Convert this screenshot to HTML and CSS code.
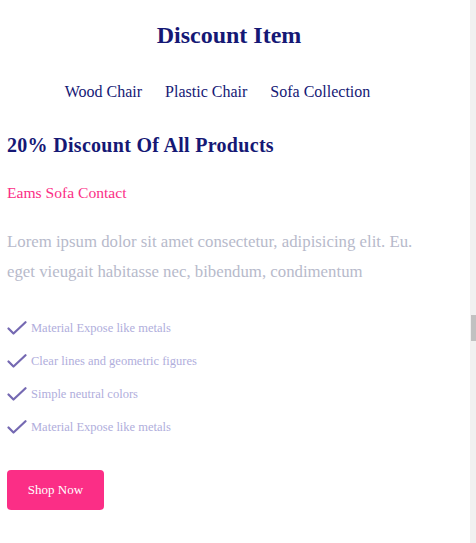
FILE: index.html
```html
<!DOCTYPE html>
<html lang="en">
<head>
<meta charset="utf-8">
<title>Discount Item</title>
<link rel="stylesheet" href="styles.css">
</head>
<body>
<main class="discount">
  <h1 class="discount__title">Discount Item</h1>
  <nav class="tabs">
    <a class="tabs__item" href="#">Wood Chair</a>
    <a class="tabs__item" href="#">Plastic Chair</a>
    <a class="tabs__item" href="#">Sofa Collection</a>
  </nav>
  <h2 class="discount__heading">20% Discount Of All Products</h2>
  <p class="discount__sub">Eams Sofa Contact</p>
  <p class="discount__text">Lorem ipsum dolor sit amet consectetur, adipisicing elit. Eu.<br>eget vieugait habitasse nec, bibendum, condimentum</p>
  <ul class="features">
    <li class="features__item"><svg class="features__icon" viewBox="0 0 20 14" width="20" height="14"><path d="M1.5 7.5 L6.5 12.5 L18.5 1.2" fill="none" stroke="currentColor" stroke-width="2.2" stroke-linecap="round" stroke-linejoin="round"/></svg>Material Expose like metals</li>
    <li class="features__item"><svg class="features__icon" viewBox="0 0 20 14" width="20" height="14"><path d="M1.5 7.5 L6.5 12.5 L18.5 1.2" fill="none" stroke="currentColor" stroke-width="2.2" stroke-linecap="round" stroke-linejoin="round"/></svg>Clear lines and geometric figures</li>
    <li class="features__item"><svg class="features__icon" viewBox="0 0 20 14" width="20" height="14"><path d="M1.5 7.5 L6.5 12.5 L18.5 1.2" fill="none" stroke="currentColor" stroke-width="2.2" stroke-linecap="round" stroke-linejoin="round"/></svg>Simple neutral colors</li>
    <li class="features__item"><svg class="features__icon" viewBox="0 0 20 14" width="20" height="14"><path d="M1.5 7.5 L6.5 12.5 L18.5 1.2" fill="none" stroke="currentColor" stroke-width="2.2" stroke-linecap="round" stroke-linejoin="round"/></svg>Material Expose like metals</li>
  </ul>
  <button class="btn" type="button">Shop Now</button>
</main>
<div class="scrollbar"><div class="scrollbar__thumb"></div></div>
</body>
</html>
```
FILE: styles.css
```css
html, body {
  margin: 0;
  padding: 0;
  background: #fff;
}
body {
  font-family: "Liberation Serif", "Times New Roman", serif;
  overflow: hidden;
}
.discount {
  width: 444px;
  padding: 0 0 0 7px;
  box-sizing: content-box;
}
.discount__title {
  margin: 0;
  padding-top: 20px;
  font-size: 24px;
  line-height: 30px;
  font-weight: 700;
  color: #151875;
  text-align: center;
}
.tabs {
  display: flex;
  justify-content: center;
  margin-top: 32px;
  line-height: 20px;
}
.tabs__item {
  font-size: 16px;
  color: #151875;
  text-decoration: none;
  margin-right: 23px;
}
.discount__heading {
  margin: 31px 0 0;
  font-size: 20px;
  line-height: 24px;
  letter-spacing: 0.3px;
  font-weight: 700;
  color: #151875;
}
.discount__sub {
  margin: 26px 0 0;
  font-size: 15.6px;
  line-height: 20px;
  color: #fb2e86;
}
.discount__text {
  margin: 24px 0 0;
  font-size: 16.8px;
  line-height: 30px;
  color: #b7bacb;
}
.features {
  list-style: none;
  margin: 31px 0 0;
  padding: 0;
  display: flex;
  flex-direction: column;
  gap: 13px;
}
.features__item {
  display: flex;
  align-items: center;
  gap: 4px;
  height: 20px;
  font-size: 12.5px;
  color: #b0aedc;
}
.features__icon {
  color: #7569b2;
  flex: none;
  margin-bottom: 1px;
}
.btn {
  display: block;
  margin-top: 33px;
  width: 97px;
  height: 40px;
  border: 0;
  border-radius: 4px;
  background: #fb2e86;
  color: #fff;
  font-family: "Liberation Serif", "Times New Roman", serif;
  font-size: 13px;
  cursor: pointer;
}
.scrollbar {
  position: fixed;
  top: 0;
  right: 0;
  width: 6px;
  height: 100%;
  background: #f1f1f1;
}
.scrollbar__thumb {
  position: absolute;
  top: 315px;
  left: 1px;
  width: 5px;
  height: 26px;
  background: #c1c1c1;
}
```
